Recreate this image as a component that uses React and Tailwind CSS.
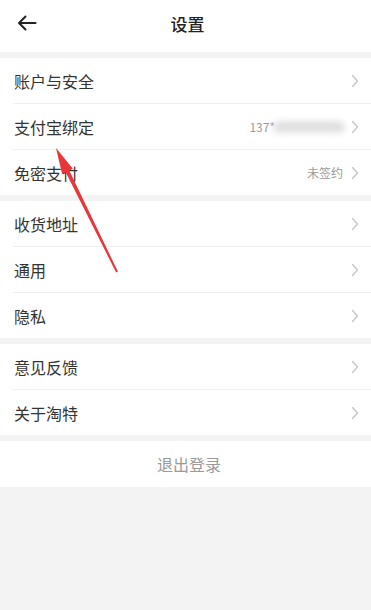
import React from "react";

const font = { fontFamily: '"Noto Sans CJK SC", "Noto Sans", sans-serif' };

function Chevron() {
  return (
    <svg width="8" height="14" viewBox="0 0 8 14" className="shrink-0">
      <path d="M1.5 1.5 L6.5 7 L1.5 12.5" fill="none" stroke="#c4c4c4" strokeWidth="1.3" strokeLinecap="round" strokeLinejoin="round" />
    </svg>
  );
}

function Row({ label, right, last }) {
  return (
    <div className="flex h-[45px] items-center pl-[14px] pr-[12px] relative">
      <span className="text-[16px] text-[#333333] flex-1 leading-none">{label}</span>
      {right}
      <Chevron />
      {!last && <div className="absolute bottom-[-1px] left-[13px] right-0 h-px bg-[#efefef]" />}
    </div>
  );
}

function Group({ children }) {
  const arr = React.Children.toArray(children);
  return (
    <div className="bg-white flex flex-col gap-px">
      {arr.map((c, i) => React.cloneElement(c, { last: i === arr.length - 1, key: i }))}
    </div>
  );
}

export default function App() {
  return (
    <div className="relative w-[371px] h-[610px] bg-[#f3f3f3] overflow-hidden" style={font}>
      <div className="h-[52px] bg-white flex items-center relative pb-[5px]">
        <svg width="20" height="16" viewBox="0 0 20 16" className="absolute left-[17px] top-[15px]">
          <path d="M18.5 8 H2 M8.5 1.5 L2 8 L8.5 14.5" fill="none" stroke="#222" strokeWidth="2" strokeLinecap="round" strokeLinejoin="round" />
        </svg>
        <div className="flex-1 text-center text-[17px] font-medium text-[#222] pl-[4px]">设置</div>
      </div>
      <div className="flex flex-col gap-[6px] pt-[6px]">
        <Group>
          <Row label="账户与安全" />
          <Row
            label="支付宝绑定"
            right={
              <div className="flex items-center mr-[6px]">
                <span className="text-[12px] text-[#999] leading-none">137*</span>
                <div className="w-[72px] h-[12px] bg-[#e0e0e0] rounded-full blur-[3px] -ml-[2px]" />
              </div>
            }
          />
          <Row label="免密支付" right={<span className="text-[12px] text-[#999] mr-[8px] leading-none">未签约</span>} />
        </Group>
        <Group>
          <Row label="收货地址" />
          <Row label="通用" />
          <Row label="隐私" />
        </Group>
        <Group>
          <Row label="意见反馈" />
          <Row label="关于淘特" />
        </Group>
        <div className="h-[46px] bg-white flex items-center justify-center">
          <span className="text-[16px] text-[#9a9a9a] pl-[7px]">退出登录</span>
        </div>
      </div>
      <svg width="371" height="610" className="absolute left-0 top-0 pointer-events-none">
        <polygon
          points="56,148 72.9,168.7 69.3,170.4 117.9,271.6 116.1,272.4 65.7,172.2 62.1,173.9"
          fill="#e8363b"
        />
      </svg>
    </div>
  );
}
